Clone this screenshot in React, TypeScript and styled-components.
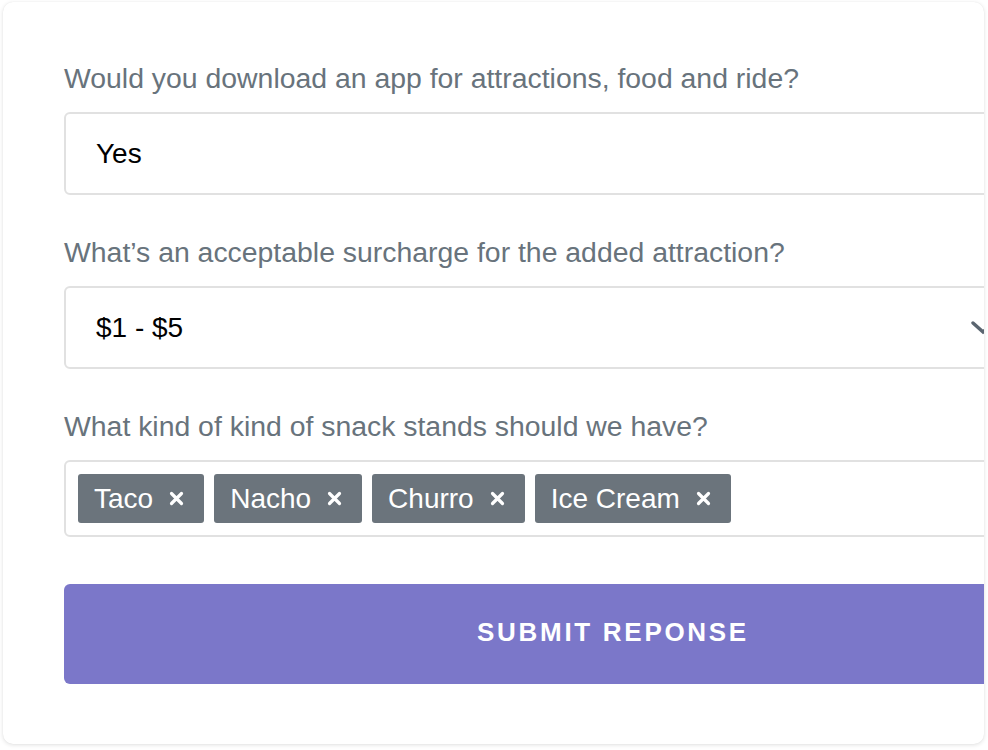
import React from "react";
import styled, { createGlobalStyle } from "styled-components";

const Global = createGlobalStyle`
  html, body { margin: 0; padding: 0; background: #ffffff; }
  body { font-family: "Liberation Sans", Arial, Helvetica, sans-serif; }
  * { box-sizing: border-box; }
`;

const Page = styled.div`
  padding: 2px 4px 6px 3px;
`;

const Card = styled.div`
  width: 981px;
  height: 742px;
  background: #ffffff;
  border-radius: 10px;
  box-shadow: 0 1px 4px rgba(0, 0, 0, 0.12), 0 0 1px rgba(0, 0, 0, 0.08);
  overflow: hidden;
  padding: 56px 0 0 61px;
`;

const Form = styled.form`
  width: 1098px;
  display: flex;
  flex-direction: column;
`;

const Field = styled.div`
  display: flex;
  flex-direction: column;
  margin-bottom: 37px;
`;

const Label = styled.label`
  font-size: 28.4px;
  line-height: 40px;
  color: #68737c;
  margin-bottom: 14px;
`;

const Box = styled.div<{ $h: number }>`
  position: relative;
  width: 940px;
  height: ${(p) => p.$h}px;
  border: 2px solid #e1e1e1;
  border-radius: 6px;
  display: flex;
  align-items: center;
  font-size: 28px;
  color: #000;
`;

const Value = styled.span`
  padding-left: 30px;
`;

const Chevron = styled.svg`
  position: absolute;
  left: 905px;
  top: 50%;
  margin-top: -8px;
`;

const Tags = styled.div`
  display: flex;
  gap: 10px;
  padding: 0 12px;
`;

const Tag = styled.span`
  display: inline-flex;
  align-items: center;
  height: 49px;
  padding: 0 20px 0 16px;
  background: #6b747c;
  color: #ffffff;
  border-radius: 3px;
  font-size: 28px;
  gap: 16px;
`;

const Button = styled.button`
  margin-top: 10px;
  height: 100px;
  width: 1098px;
  border: none;
  border-radius: 6px;
  background: #7b77c9;
  color: #ffffff;
  font-family: "Liberation Sans", Arial, Helvetica, sans-serif;
  font-weight: 700;
  font-size: 26px;
  letter-spacing: 2.7px;
  text-transform: uppercase;
  padding-bottom: 4px;
`;

const X = () => (
  <svg width="15" height="15" viewBox="0 0 15 15">
    <path d="M2.5 2.5 L12.5 12.5 M12.5 2.5 L2.5 12.5" stroke="#fff" strokeWidth="3.2" strokeLinecap="round" />
  </svg>
);

export default function App() {
  const tags = ["Taco", "Nacho", "Churro", "Ice Cream"];
  return (
    <>
      <Global />
      <Page>
        <Card>
          <Form>
            <Field>
              <Label>Would you download an app for attractions, food and ride?</Label>
              <Box $h={83}>
                <Value>Yes</Value>
              </Box>
            </Field>
            <Field>
              <Label>What’s an acceptable surcharge for the added attraction?</Label>
              <Box $h={83}>
                <Value>$1 - $5</Value>
                <Chevron width="24" height="16" viewBox="0 0 24 16">
                  <path d="M2 3 L12 12 L22 3" stroke="#5a6570" strokeWidth="3.4" fill="none" strokeLinecap="round" />
                </Chevron>
              </Box>
            </Field>
            <Field>
              <Label>What kind of kind of snack stands should we have?</Label>
              <Box $h={77}>
                <Tags>
                  {tags.map((t) => (
                    <Tag key={t}>
                      {t}
                      <X />
                    </Tag>
                  ))}
                </Tags>
              </Box>
            </Field>
            <Button type="button">Submit Reponse</Button>
          </Form>
        </Card>
      </Page>
    </>
  );
}
